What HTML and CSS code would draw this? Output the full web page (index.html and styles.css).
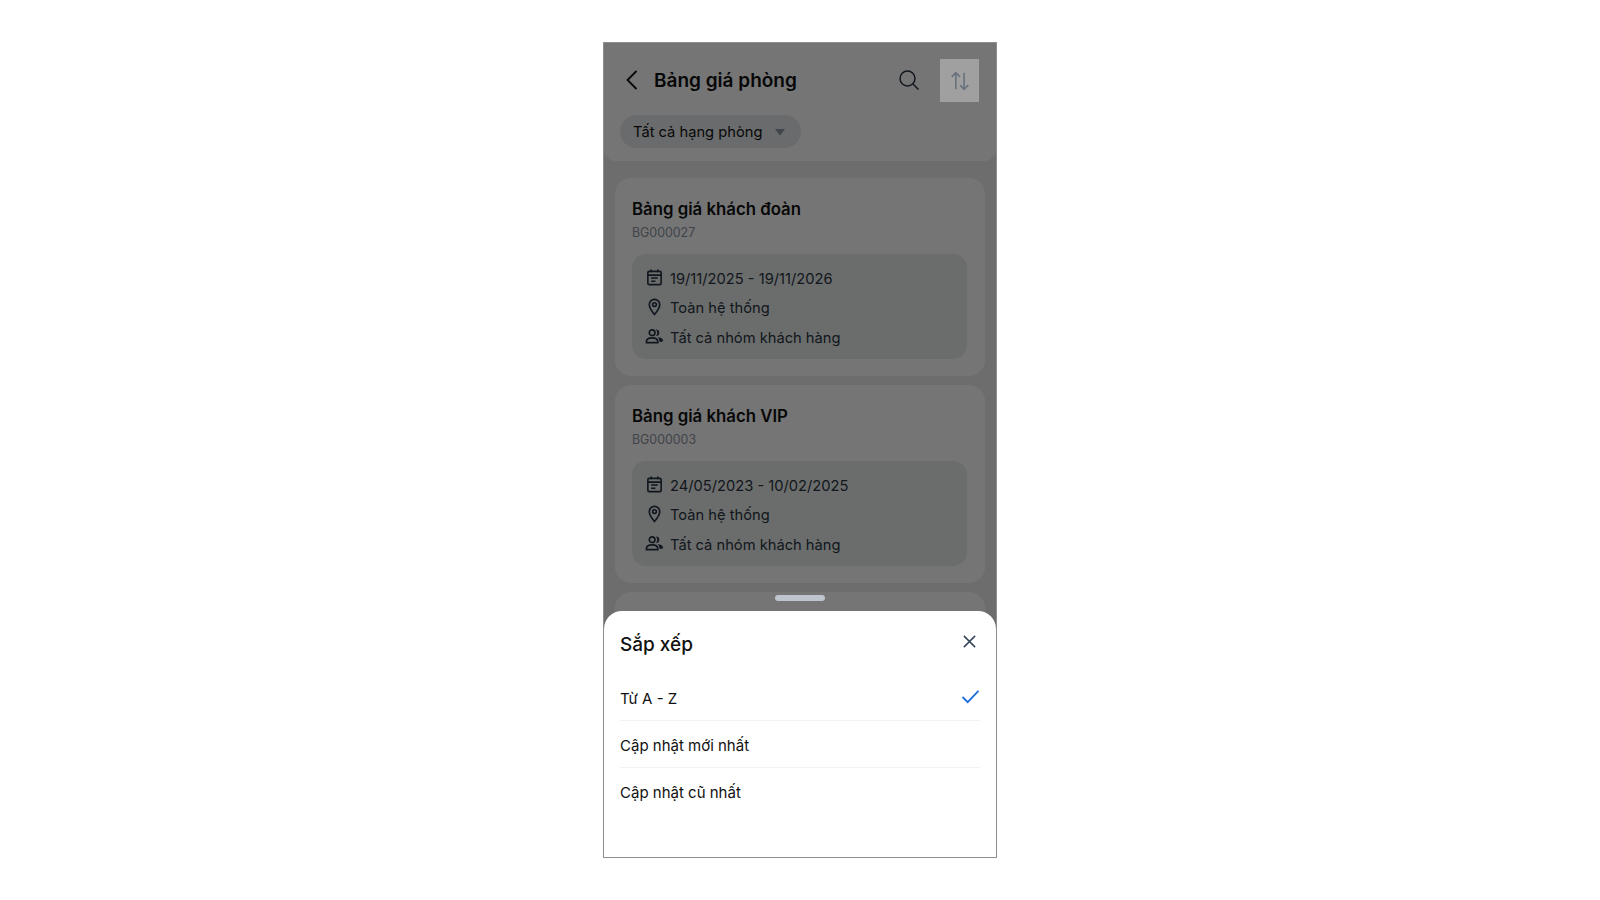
FILE: index.html
```html
<!DOCTYPE html>
<html lang="vi">
<head>
    <meta charset="UTF-8">
    <meta name="viewport" content="width=device-width, initial-scale=1.0">
    <title>Bảng giá phòng</title>
    <link rel="stylesheet" href="styles.css">
</head>
<body>
    <div class="phone">
        <header class="header">
            <div class="topbar">
                <svg class="back-icon" viewBox="0 0 24 24"><path d="M16.500 3 7.500 12l9 9"/></svg>
                <h1>Bảng giá phòng</h1>
                <svg class="search-icon" viewBox="0 0 24 24"><circle cx="10.500" cy="10.500" r="7.500"/><path d="m16 16 5.500 5.500"/></svg>
            </div>
            <div class="chip">
                <span>Tất cả hạng phòng</span>
                <svg class="chip-caret" viewBox="0 0 12 8"><path d="M1 1h10L6.500 7h-1z"/></svg>
            </div>
        </header>

        <main class="list">
            <section class="card">
                <h2>Bảng giá khách đoàn</h2>
                <p class="code">BG000027</p>
                <div class="info">
                    <div class="info-row">
                        <svg class="info-icon" viewBox="0 0 20 20"><rect x="3" y="3.500" width="14" height="14" rx="1.500"/><path d="M3 7.500h14M6.500 1.500v3M13.500 1.500v3M6.500 10.500h7M6.500 14h4.500"/></svg>
                        <span>19/11/2025 - 19/11/2026</span>
                    </div>
                    <div class="info-row">
                        <svg class="info-icon" viewBox="0 0 20 20"><path d="M10 18.500c-3.500-4-5.500-7-5.500-10.500a5.500 5.500 0 0 1 11 0c0 3.500-2 6.500-5.500 10.500z"/><circle cx="10" cy="8" r="2"/></svg>
                        <span>Toàn hệ thống</span>
                    </div>
                    <div class="info-row">
                        <svg class="info-icon" viewBox="0 0 20 20"><circle cx="7.500" cy="6" r="3"/><path d="M1.500 16.500v-1c0-2.500 2.500-4 6-4s6 1.500 6 4v1z"/><path class="fill" d="M11.500 2.500a3.500 3.500 0 0 1 0 7 5.500 5.500 0 0 0 0-7zM13.500 10.500c3 .3 5.500 1.700 5.500 3.800 0 .8-.4 1.200-1.200 1.200h-2.600c0-2-.5-3.500-1.700-5z"/></svg>
                        <span>Tất cả nhóm khách hàng</span>
                    </div>
                </div>
            </section>

            <section class="card">
                <h2>Bảng giá khách VIP</h2>
                <p class="code">BG000003</p>
                <div class="info">
                    <div class="info-row">
                        <svg class="info-icon" viewBox="0 0 20 20"><rect x="3" y="3.500" width="14" height="14" rx="1.500"/><path d="M3 7.500h14M6.500 1.500v3M13.500 1.500v3M6.500 10.500h7M6.500 14h4.500"/></svg>
                        <span>24/05/2023 - 10/02/2025</span>
                    </div>
                    <div class="info-row">
                        <svg class="info-icon" viewBox="0 0 20 20"><path d="M10 18.500c-3.500-4-5.500-7-5.500-10.500a5.500 5.500 0 0 1 11 0c0 3.500-2 6.500-5.500 10.500z"/><circle cx="10" cy="8" r="2"/></svg>
                        <span>Toàn hệ thống</span>
                    </div>
                    <div class="info-row">
                        <svg class="info-icon" viewBox="0 0 20 20"><circle cx="7.500" cy="6" r="3"/><path d="M1.500 16.500v-1c0-2.500 2.500-4 6-4s6 1.500 6 4v1z"/><path class="fill" d="M11.500 2.500a3.500 3.500 0 0 1 0 7 5.500 5.500 0 0 0 0-7zM13.500 10.500c3 .3 5.500 1.700 5.500 3.800 0 .8-.4 1.200-1.200 1.200h-2.600c0-2-.5-3.500-1.700-5z"/></svg>
                        <span>Tất cả nhóm khách hàng</span>
                    </div>
                </div>
            </section>

            <section class="card"></section>
        </main>

        <!-- lop phu va bottom sheet -->
        <div class="backdrop"></div>
        <div class="sort-btn">
            <svg viewBox="0 0 24 24"><path d="M7.500 21V3M3 7.500 7.500 3 12 7.500M16.500 3v18M12 16.500l4.500 4.500 4.500-4.500"/></svg>
        </div>
        <div class="handle"></div>
        <div class="sheet">
            <div class="sheet-head">
                <h3>Sắp xếp</h3>
                <svg class="close-icon" viewBox="0 0 16 16"><path d="M2 2l12 12M14 2 2 14"/></svg>
            </div>
            <div class="option">
                <span>Từ A - Z</span>
                <svg class="check-icon" viewBox="0 0 20 16"><path d="M1.500 8.500 7 14 18.500 2"/></svg>
            </div>
            <div class="option"><span>Cập nhật mới nhất</span></div>
            <div class="option"><span>Cập nhật cũ nhất</span></div>
        </div>
    </div>
</body>
</html>
```

FILE: styles.css
```css
/* Estilo general */
body {
    margin: 0;
    height: 900px;
    background: #fff;
    font-family: Inter, "Liberation Sans", sans-serif;
    color: #111;
    display: flex;
    justify-content: center;
    align-items: flex-start;
    overflow: hidden;
}

.phone {
    position: relative;
    width: 394px;
    height: 816px;
    margin-top: 42px;
    box-sizing: border-box;
    border: 1px solid #8e8e8e;
    background: #ededed;
    overflow: hidden;
}

/* Header */
.header {
    height: 118px;
    box-sizing: border-box;
    padding: 16px 16px 0;
    background: #fff;
    border-radius: 0 0 12px 12px;
}

.topbar {
    display: flex;
    align-items: center;
    height: 42px;
}

.topbar h1 {
    margin: 0 0 0 10px;
    flex: 1;
    font-size: 19px;
    font-weight: 600;
    color: #111;
}

.back-icon {
    width: 24px;
    height: 24px;
    fill: none;
    stroke: #111;
    stroke-width: 1.800;
}

.search-icon {
    width: 24px;
    height: 24px;
    margin-right: 59px;
    fill: none;
    stroke: #2a3442;
    stroke-width: 1.500;
}

.chip {
    display: inline-flex;
    align-items: center;
    gap: 12px;
    height: 33px;
    margin-top: 14px;
    padding: 0 15px 0 13px;
    border-radius: 17px;
    background: #e8eaeb;
    font-size: 14.700px;
}

.chip-caret {
    width: 12px;
    height: 8px;
    fill: #8b95a3;
}

/* Lista de tarjetas */
.list {
    padding: 17px 11px 0;
    display: flex;
    flex-direction: column;
    gap: 9px;
}

.card {
    height: 198px;
    flex: none;
    box-sizing: border-box;
    padding: 20px 18px 0 17px;
    background: #fff;
    border-radius: 16px;
}

.card h2 {
    margin: 0;
    font-size: 16.800px;
    line-height: 22px;
    font-weight: 600;
}

.code {
    margin: 4px 0 0;
    font-size: 12.400px;
    line-height: 18px;
    color: #8c94a0;
}

.info {
    margin-top: 12px;
    height: 105px;
    box-sizing: border-box;
    padding: 10px 13px 6px;
    background: #e9edeb;
    border-radius: 14px;
    display: flex;
    flex-direction: column;
}

.info-row {
    display: flex;
    align-items: center;
    gap: 6px;
    height: 29.600px;
    flex: none;
    font-size: 14.700px;
    color: #2a3442;
}

.info-icon {
    width: 19px;
    height: 19px;
    flex: none;
    margin-top: -3px;
    fill: none;
    stroke: #243142;
    stroke-width: 1.700;
}

.info-icon .fill {
    fill: #243142;
    stroke: none;
}

/* Overlay */
.backdrop {
    position: absolute;
    inset: 0;
    background: rgba(0, 0, 0, 0.54);
}

.sort-btn {
    position: absolute;
    top: 16px;
    left: 336px;
    width: 39px;
    height: 43px;
    display: flex;
    align-items: center;
    justify-content: center;
    background: #a0a0a0;
}

.sort-btn svg {
    width: 22px;
    height: 22px;
    fill: none;
    stroke: #6a727d;
    stroke-width: 1.800;
}

.handle {
    position: absolute;
    top: 552px;
    left: 171px;
    width: 50px;
    height: 6px;
    border-radius: 3px;
    background: #bfc5cd;
}

/* Bottom sheet */
.sheet {
    position: absolute;
    left: 0;
    right: 0;
    bottom: 0;
    height: 246px;
    box-sizing: border-box;
    padding: 16px 16px 0;
    background: #fff;
    border-radius: 18px 18px 0 0;
}

.sheet-head {
    display: flex;
    justify-content: space-between;
    align-items: center;
    height: 34px;
    margin-bottom: 13px;
}

.sheet-head h3 {
    margin: 0;
    font-size: 19px;
    font-weight: 500;
}

.close-icon {
    width: 15px;
    height: 15px;
    margin: -6px 3px 0 0;
    fill: none;
    stroke: #37465a;
    stroke-width: 1.600;
}

.option {
    display: flex;
    justify-content: space-between;
    align-items: center;
    height: 47px;
    box-sizing: border-box;
    padding-top: 2px;
    border-bottom: 1px solid #f1f2f4;
    font-size: 15px;
}

.option:last-child {
    border-bottom: none;
}

.check-icon {
    width: 19px;
    height: 15px;
    margin: -4px 0 0 0;
    fill: none;
    stroke: #1f6fe0;
    stroke-width: 2;
}
```
